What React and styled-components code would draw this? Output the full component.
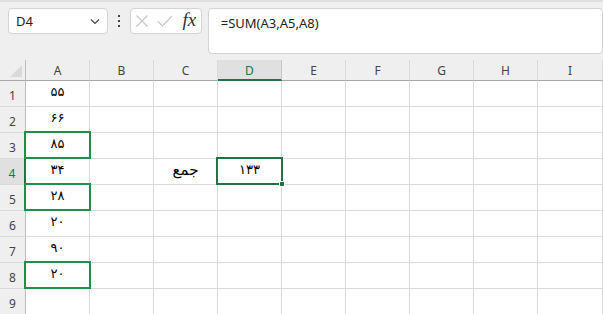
import React from "react";
import styled, { createGlobalStyle } from "styled-components";

const Global = createGlobalStyle`
  html, body { margin: 0; padding: 0; background: #ffffff; }
  body { font-family: "Segoe UI", "Noto Sans", "DejaVu Sans", sans-serif; overflow: hidden; }
  * { box-sizing: border-box; }
`;

const Page = styled.div`
  width: 603px;
  height: 314px;
  display: flex;
  flex-direction: column;
  overflow: hidden;
  background: #fff;
`;

const Toolbar = styled.div`
  height: 60px;
  flex: none;
  background: #efefef;
  border-top: 2px solid #e0e0e0;
  padding: 6px 0 0 8px;
  display: flex;
  align-items: flex-start;
`;

const Box = styled.div`
  background: #fff;
  border: 1px solid #d3d3d3;
  border-radius: 4px;
  height: ${(p) => p.$h}px;
  width: ${(p) => (p.$w ? `${p.$w}px` : "auto")};
  display: flex;
  align-items: ${(p) => (p.$top ? "flex-start" : "center")};
`;

const NameText = styled.span`
  flex: 1;
  padding-left: 7px;
  font-size: 13px;
  color: #222;
`;

const Chevron = styled.svg`
  width: 12px;
  height: 12px;
  margin-right: 6px;
`;

const Dots = styled.div`
  width: 22px;
  height: 25px;
  display: flex;
  align-items: center;
  justify-content: center;
`;

const IconBtn = styled.div`
  width: 23px;
  height: 23px;
  display: flex;
  align-items: center;
  justify-content: center;
`;

const Fx = styled.span`
  font-family: "Liberation Serif", "DejaVu Serif", serif;
  font-style: italic;
  font-size: 19px;
  line-height: 1;
  color: #333;
  margin-left: 6px;
  padding-bottom: 3px;
`;

const FormulaText = styled.div`
  font-size: 13px;
  color: #222;
  padding: 5px 0 0 12px;
`;

const Sheet = styled.div`
  flex: 1;
  display: grid;
  grid-template-columns: 26px repeat(8, 64px) 1fr;
  grid-template-rows: 21px repeat(9, 26px);
  font-family: "Segoe UI", "Noto Sans", "DejaVu Sans", sans-serif;
`;

const Corner = styled.div`
  background: #efefef;
  border-right: 1px solid #bdbdbd;
  border-bottom: 1px solid #a8a8a8;
  position: relative;
`;

const ColHead = styled.div`
  background: ${(p) => (p.$active ? "#e0e0e0" : "#efefef")};
  border-right: 1px solid ${(p) => (p.$active ? "#c6c6c6" : "#dadada")};
  border-bottom: ${(p) => (p.$active ? "2px solid #217346" : "1px solid #a8a8a8")};
  color: ${(p) => (p.$active ? "#217346" : "#444")};
  font-size: 12px;
  display: flex;
  align-items: center;
  justify-content: center;
  padding-top: ${(p) => (p.$active ? "1px" : "0")};
`;

const RowHead = styled.div`
  background: ${(p) => (p.$active ? "#e0e0e0" : "#efefef")};
  border-right: ${(p) => (p.$active ? "2px solid #217346" : "1px solid #bdbdbd")};
  border-bottom: 1px solid #dadada;
  color: ${(p) => (p.$active ? "#217346" : "#444")};
  font-size: 12px;
  display: flex;
  align-items: center;
  justify-content: center;
  padding-top: 3px;
`;

const Cell = styled.div`
  position: relative;
  border-right: 1px solid #dadada;
  border-bottom: 1px solid #dadada;
  font-family: "DejaVu Sans", "Noto Sans", sans-serif;
  font-size: ${(p) => (p.$big ? 15 : 13)}px;
  color: #000;
  display: flex;
  align-items: center;
  justify-content: center;
  padding-bottom: 4px;
`;

const Highlight = styled.div`
  position: absolute;
  top: -2px;
  left: -2px;
  right: -2px;
  bottom: -1px;
  border: 2px solid ${(p) => (p.$active ? "#217346" : "#1e9148")};
  pointer-events: none;
  z-index: 2;
`;

const Handle = styled.div`
  position: absolute;
  right: -4px;
  bottom: -4px;
  width: 6px;
  height: 6px;
  background: #217346;
  border: 1px solid #fff;
`;

const cols = ["A", "B", "C", "D", "E", "F", "G", "H", "I"];

const data = {
  A1: "۵۵",
  A2: "۶۶",
  A3: "۸۵",
  A4: "۳۴",
  A5: "۲۸",
  A6: "۲۰",
  A7: "۹۰",
  A8: "۲۰",
  C4: "جمع",
  D4: "۱۳۳",
};

const ranges = new Set(["A3", "A5", "A8"]);

export default function App() {
  const rows = [1, 2, 3, 4, 5, 6, 7, 8, 9];
  return (
    <>
      <Global />
      <Page>
        <Toolbar>
          <Box $w={101} $h={26}>
            <NameText>D4</NameText>
            <Chevron viewBox="0 0 12 12">
              <path d="M2 4.5 L6 8.5 L10 4.5" fill="none" stroke="#444" strokeWidth="1.2" />
            </Chevron>
          </Box>
          <Dots>
            <svg width="4" height="14" viewBox="0 0 4 14">
              <rect x="1" y="1" width="2" height="2" fill="#444" />
              <rect x="1" y="6" width="2" height="2" fill="#444" />
              <rect x="1" y="11" width="2" height="2" fill="#444" />
            </svg>
          </Dots>
          <Box $w={73} $h={26}>
            <IconBtn>
              <svg width="14" height="14" viewBox="0 0 14 14">
                <path d="M1.5 1.5 L12.5 12.5 M12.5 1.5 L1.5 12.5" stroke="#c4c4c4" strokeWidth="1.1" />
              </svg>
            </IconBtn>
            <IconBtn>
              <svg width="16" height="14" viewBox="0 0 16 14">
                <path d="M1 7.5 L5.5 12 L15 2" fill="none" stroke="#c4c4c4" strokeWidth="1.1" />
              </svg>
            </IconBtn>
            <Fx>fx</Fx>
          </Box>
          <Box $w={400} $h={46} $top style={{ marginLeft: 6 }}>
            <FormulaText>=SUM(A3,A5,A8)</FormulaText>
          </Box>
        </Toolbar>
        <Sheet>
          <Corner>
            <svg width="14" height="14" viewBox="0 0 14 14" style={{ position: "absolute", right: 2, bottom: 2 }}>
              <path d="M13 1 L13 13 L1 13 Z" fill="#d9d9d9" />
            </svg>
          </Corner>
          {cols.map((c) => (
            <ColHead key={c} $active={c === "D"}>
              {c}
            </ColHead>
          ))}
          {rows.map((r) => (
            <React.Fragment key={r}>
              <RowHead $active={r === 4}>{r}</RowHead>
              {cols.map((c) => {
                const id = `${c}${r}`;
                return (
                  <Cell key={id} $big={id === "C4"}>
                    {data[id] || ""}
                    {ranges.has(id) && <Highlight />}
                    {id === "D4" && (
                      <Highlight $active>
                        <Handle />
                      </Highlight>
                    )}
                  </Cell>
                );
              })}
            </React.Fragment>
          ))}
        </Sheet>
      </Page>
    </>
  );
}
